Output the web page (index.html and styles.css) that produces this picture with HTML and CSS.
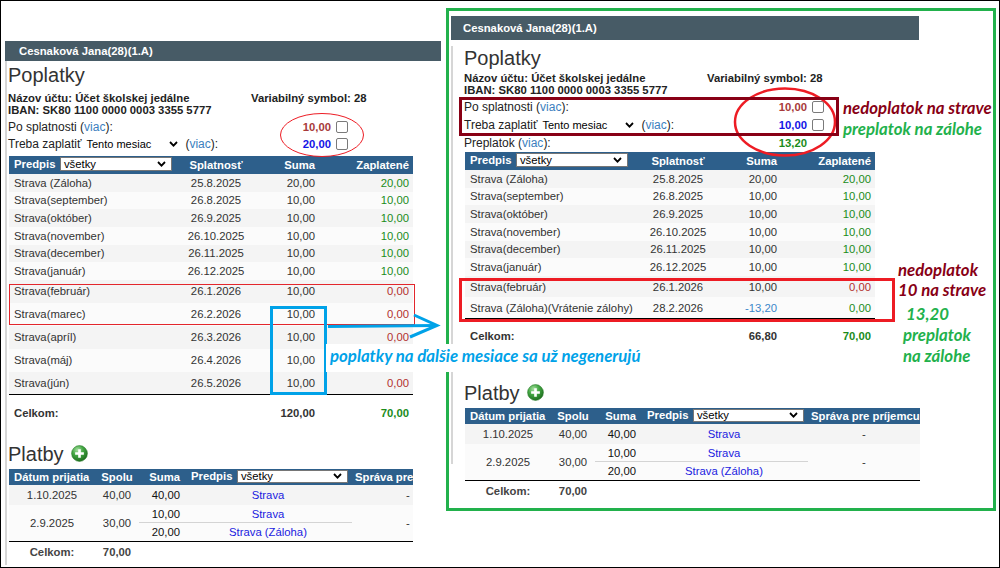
FILE: index.html
```html
<!DOCTYPE html>
<html lang="sk">
<head>
<meta charset="utf-8">
<title>Poplatky</title>
<link rel="stylesheet" href="styles.css">
</head>
<body>
<div class="frame">

  <section class="shot shot-left">
    <div class="bar">Cesnaková Jana(28)(1.A)</div>
    <div class="content">
      <h2 class="title">Poplatky</h2>
      <div class="acct">
        <div><span class="acct-name">Názov účtu: Účet školskej jedálne</span><span>Variabilný symbol: 28</span></div>
        <div>IBAN: SK80 1100 0000 0003 3355 5777</div>
      </div>
      <div class="srows">
        <div class="srow"><span class="slabel">Po splatnosti (<a class="viac">viac</a>):</span><span class="amt red">10,00</span><span class="chk"></span></div>
        <div class="srow"><span class="slabel">Treba zaplatiť <span class="isel">Tento mesiac<svg class="chev" width="9" height="6" viewBox="0 0 9 6"><polyline points="1,1 4.5,4.6 8,1" fill="none" stroke="#000" stroke-width="1.8"/></svg></span> (<a class="viac">viac</a>):</span><span class="amt blue">20,00</span><span class="chk"></span></div>
      </div>
      <table class="fees">
        <colgroup><col class="c1"><col class="c2"><col class="c3"><col class="c4"></colgroup>
        <thead>
          <tr><th class="th-pred">Predpis<span class="sel">všetky<svg class="chev" width="9" height="6" viewBox="0 0 9 6"><polyline points="1,1 4.5,4.6 8,1" fill="none" stroke="#000" stroke-width="1.8"/></svg></span></th><th class="ctr">Splatnosť</th><th class="num">Suma</th><th class="num">Zaplatené</th></tr>
        </thead>
        <tbody>
          <tr><td>Strava (Záloha)</td><td class="ctr">25.8.2025</td><td class="num">20,00</td><td class="num ok">20,00</td></tr>
          <tr><td>Strava(september)</td><td class="ctr">26.8.2025</td><td class="num">10,00</td><td class="num ok">10,00</td></tr>
          <tr><td>Strava(október)</td><td class="ctr">26.9.2025</td><td class="num">10,00</td><td class="num ok">10,00</td></tr>
          <tr><td>Strava(november)</td><td class="ctr">26.10.2025</td><td class="num">10,00</td><td class="num ok">10,00</td></tr>
          <tr><td>Strava(december)</td><td class="ctr">26.11.2025</td><td class="num">10,00</td><td class="num ok">10,00</td></tr>
          <tr><td>Strava(január)</td><td class="ctr">26.12.2025</td><td class="num">10,00</td><td class="num ok">10,00</td></tr>
          <tr class="tall"><td>Strava(február)</td><td class="ctr">26.1.2026</td><td class="num">10,00</td><td class="num bad">0,00</td></tr>
          <tr class="tall"><td>Strava(marec)</td><td class="ctr">26.2.2026</td><td class="num">10,00</td><td class="num bad">0,00</td></tr>
          <tr class="tall"><td>Strava(apríl)</td><td class="ctr">26.3.2026</td><td class="num">10,00</td><td class="num bad">0,00</td></tr>
          <tr class="tall"><td>Strava(máj)</td><td class="ctr">26.4.2026</td><td class="num">10,00</td><td class="num bad">0,00</td></tr>
          <tr class="tall"><td>Strava(jún)</td><td class="ctr">26.5.2026</td><td class="num">10,00</td><td class="num bad">0,00</td></tr>
        </tbody>
        <tfoot>
          <tr><td>Celkom:</td><td></td><td class="num">120,00</td><td class="num ok">70,00</td></tr>
        </tfoot>
      </table>
      <h2 class="title title-pay">Platby <svg class="plus" width="17" height="17" viewBox="0 0 18 18"><defs><radialGradient id="pgl" cx="38%" cy="28%" r="75%"><stop offset="0" stop-color="#a6e0a0"/><stop offset="0.45" stop-color="#45a845"/><stop offset="1" stop-color="#1c6b1c"/></radialGradient></defs><circle cx="9" cy="9" r="8.4" fill="url(#pgl)" stroke="#2c7d2c" stroke-width="0.6"/><path d="M9 4.4v9.2M4.4 9h9.2" stroke="#fff" stroke-width="2.8"/></svg></h2>
      <table class="pays">
        <colgroup><col class="p1"><col class="p2"><col class="p3"><col class="p4"><col class="p5"></colgroup>
        <thead>
          <tr><th class="ctr-l">Dátum prijatia</th><th class="ctr">Spolu</th><th class="num">Suma</th><th class="th-pred2">Predpis<span class="sel sel-sm">všetky<svg class="chev" width="9" height="6" viewBox="0 0 9 6"><polyline points="1,1 4.5,4.6 8,1" fill="none" stroke="#000" stroke-width="1.8"/></svg></span></th><th class="th-msg">Správa pre príjemcu</th></tr>
        </thead>
        <tbody>
          <tr class="pr1"><td class="ctr">1.10.2025</td><td class="ctr">40,00</td><td class="num dark">40,00</td><td class="ctr"><a class="lnk">Strava</a></td><td class="ctr">-</td></tr>
          <tr class="pr2a"><td class="ctr" rowspan="2">2.9.2025</td><td class="ctr" rowspan="2">30,00</td><td class="num dark">10,00</td><td class="ctr"><a class="lnk">Strava</a></td><td class="ctr" rowspan="2">-</td></tr>
          <tr class="pr2b"><td class="num dark sep">20,00</td><td class="ctr sep"><a class="lnk">Strava (Záloha)</a></td></tr>
        </tbody>
        <tfoot>
          <tr><td class="ctr">Celkom:</td><td class="ctr">70,00</td><td colspan="3"></td></tr>
        </tfoot>
      </table>
    </div>
  </section>

  <section class="shot shot-right">
    <div class="bar">Cesnaková Jana(28)(1.A)</div>
    <div class="content">
      <h2 class="title">Poplatky</h2>
      <div class="acct">
        <div><span class="acct-name">Názov účtu: Účet školskej jedálne</span><span>Variabilný symbol: 28</span></div>
        <div>IBAN: SK80 1100 0000 0003 3355 5777</div>
      </div>
      <div class="srows">
        <div class="srow"><span class="slabel">Po splatnosti (<a class="viac">viac</a>):</span><span class="amt red">10,00</span><span class="chk"></span></div>
        <div class="srow"><span class="slabel">Treba zaplatiť <span class="isel">Tento mesiac<svg class="chev" width="9" height="6" viewBox="0 0 9 6"><polyline points="1,1 4.5,4.6 8,1" fill="none" stroke="#000" stroke-width="1.8"/></svg></span> (<a class="viac">viac</a>):</span><span class="amt blue">10,00</span><span class="chk"></span></div>
        <div class="srow"><span class="slabel">Preplatok (<a class="viac">viac</a>):</span><span class="amt ok">13,20</span><span class="chk chk-none"></span></div>
      </div>
      <table class="fees">
        <colgroup><col class="c1"><col class="c2"><col class="c3"><col class="c4"></colgroup>
        <thead>
          <tr><th class="th-pred">Predpis<span class="sel">všetky<svg class="chev" width="9" height="6" viewBox="0 0 9 6"><polyline points="1,1 4.5,4.6 8,1" fill="none" stroke="#000" stroke-width="1.8"/></svg></span></th><th class="ctr">Splatnosť</th><th class="num">Suma</th><th class="num">Zaplatené</th></tr>
        </thead>
        <tbody>
          <tr><td>Strava (Záloha)</td><td class="ctr">25.8.2025</td><td class="num">20,00</td><td class="num ok">20,00</td></tr>
          <tr><td>Strava(september)</td><td class="ctr">26.8.2025</td><td class="num">10,00</td><td class="num ok">10,00</td></tr>
          <tr><td>Strava(október)</td><td class="ctr">26.9.2025</td><td class="num">10,00</td><td class="num ok">10,00</td></tr>
          <tr><td>Strava(november)</td><td class="ctr">26.10.2025</td><td class="num">10,00</td><td class="num ok">10,00</td></tr>
          <tr><td>Strava(december)</td><td class="ctr">26.11.2025</td><td class="num">10,00</td><td class="num ok">10,00</td></tr>
          <tr><td>Strava(január)</td><td class="ctr">26.12.2025</td><td class="num">10,00</td><td class="num ok">10,00</td></tr>
          <tr class="tall"><td>Strava(február)</td><td class="ctr">26.1.2026</td><td class="num">10,00</td><td class="num bad">0,00</td></tr>
          <tr class="tall"><td>Strava (Záloha)(Vrátenie zálohy)</td><td class="ctr">28.2.2026</td><td class="num neg">-13,20</td><td class="num ok">0,00</td></tr>
        </tbody>
        <tfoot>
          <tr><td>Celkom:</td><td></td><td class="num">66,80</td><td class="num ok">70,00</td></tr>
        </tfoot>
      </table>
      <h2 class="title title-pay">Platby <svg class="plus" width="17" height="17" viewBox="0 0 18 18"><defs><radialGradient id="pgr" cx="38%" cy="28%" r="75%"><stop offset="0" stop-color="#a6e0a0"/><stop offset="0.45" stop-color="#45a845"/><stop offset="1" stop-color="#1c6b1c"/></radialGradient></defs><circle cx="9" cy="9" r="8.4" fill="url(#pgr)" stroke="#2c7d2c" stroke-width="0.6"/><path d="M9 4.4v9.2M4.4 9h9.2" stroke="#fff" stroke-width="2.8"/></svg></h2>
      <table class="pays">
        <colgroup><col class="p1"><col class="p2"><col class="p3"><col class="p4"><col class="p5"></colgroup>
        <thead>
          <tr><th class="ctr-l">Dátum prijatia</th><th class="ctr">Spolu</th><th class="num">Suma</th><th class="th-pred2">Predpis<span class="sel sel-sm">všetky<svg class="chev" width="9" height="6" viewBox="0 0 9 6"><polyline points="1,1 4.5,4.6 8,1" fill="none" stroke="#000" stroke-width="1.8"/></svg></span></th><th class="th-msg">Správa pre príjemcu</th></tr>
        </thead>
        <tbody>
          <tr class="pr1"><td class="ctr">1.10.2025</td><td class="ctr">40,00</td><td class="num dark">40,00</td><td class="ctr"><a class="lnk">Strava</a></td><td class="ctr">-</td></tr>
          <tr class="pr2a"><td class="ctr" rowspan="2">2.9.2025</td><td class="ctr" rowspan="2">30,00</td><td class="num dark">10,00</td><td class="ctr"><a class="lnk">Strava</a></td><td class="ctr" rowspan="2">-</td></tr>
          <tr class="pr2b"><td class="num dark sep">20,00</td><td class="ctr sep"><a class="lnk">Strava (Záloha)</a></td></tr>
        </tbody>
        <tfoot>
          <tr><td class="ctr">Celkom:</td><td class="ctr">70,00</td><td colspan="3"></td></tr>
        </tfoot>
      </table>
    </div>
  </section>

  <!-- annotations drawn over the screenshots -->
  <svg class="ann-ell ann-ell-l" width="86" height="46" viewBox="0 0 86 46"><ellipse cx="43" cy="23" rx="41.5" ry="21.5" fill="none" stroke="#ed1c24" stroke-width="1"/></svg>
  <div class="ann-box ann-box-l"></div>
  <div class="ann-blue-rect"></div>
  <svg class="ann-arrow" width="118" height="30" viewBox="0 0 118 30"><path d="M2 16.5 L110 15.5" fill="none" stroke="#00a2e8" stroke-width="3"/><path d="M88 5 L111 15.5 L84 27" fill="none" stroke="#00a2e8" stroke-width="3" stroke-linejoin="miter"/></svg>
  <div class="ann-note ann-note-blue">poplatky na ďalšie mesiace sa už negenerujú</div>

  <svg class="ann-ell ann-ell-r" width="106" height="72" viewBox="0 0 106 72"><ellipse cx="53" cy="36" rx="50" ry="33.5" fill="none" stroke="#ed1c24" stroke-width="2.5"/></svg>
  <div class="ann-box ann-box-maroon"></div>
  <div class="ann-box ann-box-r"></div>
  <div class="ann-text ann-t1 maroon">nedoplatok na strave</div>
  <div class="ann-text ann-t2 green">preplatok na zálohe</div>
  <div class="ann-text ann-t3 maroon">nedoplatok<br>10 na strave</div>
  <div class="ann-text ann-t4 green"><span class="t4a">13,20</span><br>preplatok<br>na zálohe</div>
</div>
</body>
</html>
```

FILE: styles.css
```css
* { box-sizing: border-box; }
html, body { margin: 0; padding: 0; background: #fff; }
body {
  font-family: "Liberation Sans", Arial, sans-serif;
  font-size: 11.3px;
  color: #333;
}

.frame {
  position: relative;
  width: 1000px;
  height: 568px;
  border: 1px solid #000;
  display: flex;
  align-items: flex-start;
  overflow: hidden;
}

/* ---------- screenshot panels ---------- */
.shot-left { width: 436px; margin: 40px 0 0 4px; }
.shot-right {
  width: 550px;
  height: 503px;
  margin: 7px 0 0 5px;
  border: 3px solid #22b14c;
  padding: 5px 0 0 2px;
}

.bar {
  background: #475b66;
  color: #fff;
  font-weight: bold;
  font-size: 11.3px;
  height: 20px;
  line-height: 20px;
  padding-left: 14px;
}
.shot-right .bar { width: 468px; height: 24px; line-height: 24px; padding-left: 12px; }

.content { position: relative; padding-left: 3px; }
.content::before {
  content: "";
  position: absolute;
  left: 0; top: 0;
  width: 2px;
  background: #d6d6d6;
}
.shot-left .content { height: 504px; width: 408px; overflow: hidden; }
.shot-left .content::before { height: 504px; }
.shot-right .content { padding-left: 13px; }
.shot-right .content::before { height: 418px; }

.title {
  margin: 2px 0 0;
  font-size: 20px;
  line-height: 24px;
  font-weight: normal;
  color: #333;
}
.shot-right .title { margin-top: 6px; }
.title-pay { display: flex; align-items: center; gap: 0; }
.shot-left .title-pay { margin-top: 11px; }
.shot-right .title-pay { margin-top: 28px; }
.plus { margin-left: 7px; }

.acct { font-weight: bold; line-height: 12px; color: #222; margin-top: 5px; }
.shot-right .acct { margin-top: 2px; }
.acct-name { display: inline-block; width: 243px; }

.srows { margin-top: 2.5px; }
.shot-right .srows { margin-top: 2px; }
.srow {
  display: flex;
  align-items: center;
  width: 340px;
  height: 17px;
  font-size: 12px;
  color: #222;
}
.shot-right .srow { width: 360px; height: 18px; }
.slabel { white-space: nowrap; display: flex; align-items: center; }
.isel {
  display: inline-flex;
  align-items: center;
  justify-content: space-between;
  width: 98px;
  font-size: 11px;
  color: #000;
  padding: 0 4px 0 2px;
  margin: 0 3px;
}
.viac { color: #3c7fc0; text-decoration: none; }
.amt { margin-left: auto; font-weight: bold; font-size: 11.3px; }
.chk {
  width: 12px;
  height: 12px;
  margin-left: 5px;
  border: 1px solid #7a7a7a;
  border-radius: 2px;
  background: #fff;
}
.chk-none { visibility: hidden; }

.red { color: #a83a3a; }
.blue { color: #1414e6; }
.ok { color: #1b8c1b; }
.bad { color: #b3302f; }
.neg { color: #3b87c9; }

/* ---------- Poplatky table ---------- */
.fees {
  border-collapse: collapse;
  table-layout: fixed;
  width: 404px;
  margin: 3.5px 0 0 1px;
}
.shot-right .fees { width: 410px; margin-top: 0; }
.fees .c1 { width: 177px; }
.shot-right .fees .c1 { width: 183px; }
.fees .c2 { width: 60px; }
.fees .c3 { width: 73px; }
.fees .c4 { width: 94px; }

.fees th, .pays th {
  background: #2d5f8b;
  color: #fff;
  font-weight: bold;
  padding: 0;
  white-space: nowrap;
}
.fees th { height: 18px; }
.fees td { padding: 0; white-space: nowrap; height: 17.67px; }
.fees td:first-child { padding-left: 5px; }
.fees tbody tr:nth-child(odd) { background: #f4f4f4; }
.fees tbody tr:nth-child(even) { background: #fbfbfb; }
.fees tbody tr.tall td { height: 23px; }
.shot-right .fees tbody tr.tall td { height: 21.5px; }
.fees tfoot td { border-top: 1px solid #000; height: 36px; font-weight: bold; background: #fff; }
.shot-right .fees tfoot td { height: 34px; }
.ctr { text-align: center; }
.num { text-align: right; padding-right: 4px !important; }
.th-pred { text-align: left; padding-left: 5px !important; }

.sel {
  display: inline-flex;
  align-items: center;
  justify-content: space-between;
  vertical-align: middle;
  width: 112px;
  height: 14px;
  margin-left: 4.5px;
  padding: 0 5px 0 3px;
  background: #fff;
  color: #000;
  border: 1px solid #767676;
  font-weight: normal;
  font-size: 11.3px;
  position: relative;
  top: -1px;
}
.sel-sm { width: 111px; height: 13px; }
.chev { display: block; }

/* ---------- Platby table ---------- */
.pays {
  border-collapse: collapse;
  table-layout: fixed;
  width: 455px;
  margin: 3px 0 0 1px;
}
.pays .p1 { width: 86px; }
.pays .p2 { width: 44px; }
.pays .p3 { width: 45px; }
.pays .p4 { width: 168px; }
.pays .p5 { width: 112px; }
.pays th { height: 16px; }
.th-pred2 { text-align: left; padding-left: 7px !important; }
.th-msg { text-align: left; padding-left: 3px !important; }
.ctr-l { text-align: left; padding-left: 5px !important; }
.pays td { padding: 0; white-space: nowrap; }
.pr1 { background: #f4f4f4; }
.pr1 td { height: 20px; }
.pr2a, .pr2b { background: #fbfbfb; }
.pr2a td { height: 18px; }
.pr2b td { height: 19px; }
.pays td.sep { border-top: 1px solid #d4d4d4; }
.dark { color: #111; }
.lnk { color: #1a1ae0; text-decoration: none; }
.pays tfoot td { border-top: 1px solid #000; height: 20px; font-weight: bold; color: #444; }

/* ---------- annotations (overlay) ---------- */
.ann-ell, .ann-box, .ann-blue-rect, .ann-arrow, .ann-note, .ann-text { position: absolute; }
.ann-ell-l { left: 278px; top: 111px; }
.ann-ell-r { left: 731px; top: 85px; }

.ann-box-l { left: 8px; top: 283px; width: 406px; height: 41px; border: 1px solid #e3262c; }
.ann-box-maroon { left: 458px; top: 96px; width: 380px; height: 39px; border: 3px solid #880015; }
.ann-box-r { left: 458px; top: 277px; width: 436px; height: 44px; border: 3px solid #ed1c24; }

.ann-blue-rect { left: 269px; top: 305px; width: 57px; height: 89px; border: 3px solid #00a2e8; }
.ann-arrow { left: 325px; top: 309px; }

.ann-text, .ann-note {
  font-family: "Lato", "Liberation Sans", sans-serif;
  font-style: italic;
  font-weight: bold;
  white-space: nowrap;
}
.ann-note {
  left: 325px;
  top: 343px;
  width: 323px;
  height: 28px;
  background: #fff;
  color: #00a2e8;
  font-size: 16.8px;
  line-height: 23px;
  padding: 0 0 0 4px;
}
.maroon { color: #880015; }
.green { color: #22b14c; }
.ann-text { font-size: 16.8px; }
.ann-t1 { left: 842px; top: 96px; line-height: 21px; }
.ann-t2 { left: 842px; top: 117px; line-height: 21px; }
.ann-t3 { left: 897px; top: 259px; line-height: 20px; }
.ann-t4 { left: 902px; top: 302px; line-height: 21px; }
.t4a { margin-left: 3px; }
```
